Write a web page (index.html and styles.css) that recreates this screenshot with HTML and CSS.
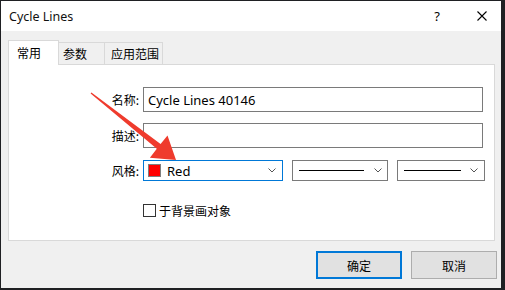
FILE: index.html
```html
<!DOCTYPE html>
<html>
<head>
<meta charset="utf-8">
<link rel="stylesheet" href="styles.css">
</head>
<body>
<div class="win">
  <div class="titlebar">
    <span class="title">Cycle Lines</span>
    <span class="help">?</span>
    <span class="close"><svg width="10" height="10" viewBox="0 0 10 10"><path d="M0.5 0.5L9.5 9.5M9.5 0.5L0.5 9.5" stroke="#000" stroke-width="1.1" fill="none"/></svg></span>
  </div>
  <div class="content">
    <div class="tabs">
      <div class="tab active">常用</div>
      <div class="tab t2">参数</div>
      <div class="tab t3">应用范围</div>
    </div>
    <div class="panel">
      <div class="row r1">
        <span class="lbl">名称:</span>
        <div class="input">Cycle Lines 40146</div>
      </div>
      <div class="row r2">
        <span class="lbl">描述:</span>
        <div class="input"></div>
      </div>
      <div class="row r3">
        <span class="lbl">风格:</span>
        <div class="combo c1 focus">
          <span class="swatch"></span><span class="ctext">Red</span>
          <svg class="chev" width="8" height="5" viewBox="0 0 8 5"><polyline points="0.5,0.5 4,4 7.5,0.5" fill="none" stroke="#555" stroke-width="1"/></svg>
        </div>
        <div class="combo c2">
          <span class="line l2"></span>
          <svg class="chev" width="8" height="5" viewBox="0 0 8 5"><polyline points="0.5,0.5 4,4 7.5,0.5" fill="none" stroke="#555" stroke-width="1"/></svg>
        </div>
        <div class="combo c3">
          <span class="line l3"></span>
          <svg class="chev" width="8" height="5" viewBox="0 0 8 5"><polyline points="0.5,0.5 4,4 7.5,0.5" fill="none" stroke="#555" stroke-width="1"/></svg>
        </div>
      </div>
      <div class="row r4">
        <span class="check"></span>
        <span class="chklbl">于背景画对象</span>
      </div>
    </div>
    <div class="buttons">
      <div class="btn ok">确定</div>
      <div class="btn">取消</div>
    </div>
  </div>
</div>
<svg class="arrow" width="505" height="290" viewBox="0 0 505 290">
  <polygon points="91.4,92.4 160.6,144.0 167.5,135.4 176,160 149.9,157.7 156.8,148.8 90.6,93.6" fill="#ef3b2d"/>
</svg>
</body>
</html>
```

FILE: styles.css
```css
* { box-sizing: border-box; }
html, body { margin: 0; padding: 0; }
body {
  width: 505px;
  height: 290px;
  background: #1f2023;
  position: relative;
  overflow: hidden;
  font-family: "Noto Sans", "Noto Sans CJK SC", sans-serif;
  font-size: 12px;
  color: #000;
}
.win {
  margin: 1px 0 0 1px;
  width: 500px;
  height: 287px;
  background: #f0f0f0;
  display: flex;
  flex-direction: column;
}
.titlebar {
  height: 30px;
  background: #fff;
  display: flex;
  align-items: center;
  padding-left: 8px;
}
.title {
  font-size: 12.5px;
  color: #111;
}
.help {
  margin-left: auto;
  width: 20px;
  text-align: center;
  font-size: 13px;
}
.close {
  width: 20px;
  margin-left: 25px;
  margin-right: 9px;
  display: flex;
  justify-content: center;
}
.content {
  padding: 9px 6px 0 7px;
  display: flex;
  flex-direction: column;
}
.tabs {
  display: flex;
  align-items: flex-end;
  height: 24px;
  position: relative;
  z-index: 1;
}
.tab {
  font-family: "Noto Sans CJK SC", sans-serif;
  font-size: 12px;
  height: 22px;
  border: 1px solid #d9d9d9;
  border-bottom: none;
  border-left: none;
  display: flex;
  align-items: center;
  background: #f0f0f0;
}
.tab.active {
  width: 51px;
  height: 25px;
  margin-bottom: -1px;
  background: #fff;
  border-left: 1px solid #d9d9d9;
  padding-left: 8px;
  padding-bottom: 2px;
}
.t2 { width: 46px; padding-left: 4px; }
.t3 { width: 58px; padding-left: 6px; }
.panel {
  height: 177px;
  background: #fff;
  border: 1px solid #d9d9d9;
  padding-top: 22px;
  display: flex;
  flex-direction: column;
}
.row {
  display: flex;
  align-items: center;
}
.lbl {
  width: 134px;
  text-align: right;
  padding-right: 4px;
  font-family: "Noto Sans CJK SC", sans-serif;
  font-size: 12px;
}
.r2 { margin-top: 11px; }
.r3 { margin-top: 12px; }
.r4 { margin-top: 21px; padding-left: 134px; }
.input {
  width: 340px;
  height: 25px;
  border: 1px solid #7a7a7a;
  background: #fff;
  display: flex;
  align-items: center;
  padding-left: 4px;
  font-size: 13px;
}
.combo {
  height: 21px;
  border: 1px solid #7a7a7a;
  display: flex;
  align-items: center;
  position: relative;
}
.combo.focus { border-color: #0078d7; }
.c1 { width: 140px; padding-left: 4px; }
.c2 { width: 96px; margin-left: 9px; padding-left: 6px; }
.c3 { width: 88px; margin-left: 9px; padding-left: 6px; }
.swatch {
  width: 13px;
  height: 13px;
  background: #ff0000;
  border: 1px solid #7f7f7f;
}
.ctext {
  margin-left: 6px;
  font-size: 13px;
}
.chev { margin-left: auto; margin-right: 6px; }
.c2 .chev { margin-right: 5px; }
.c3 .chev { margin-right: 6px; }
.line {
  height: 1px;
  background: #000;
}
.l2 { width: 65px; }
.l3 { width: 57px; }
.check {
  width: 13px;
  height: 13px;
  border: 1px solid #333;
  background: #fff;
}
.chklbl {
  margin-left: 3px;
  font-family: "Noto Sans CJK SC", sans-serif;
  font-size: 12px;
}
.buttons {
  display: flex;
  justify-content: flex-end;
  gap: 9px;
  margin-top: 10px;
  margin-right: -2px;
}
.btn {
  width: 86px;
  height: 28px;
  background: #e1e1e1;
  border: 1px solid #adadad;
  display: flex;
  align-items: center;
  justify-content: center;
  font-family: "Noto Sans CJK SC", sans-serif;
  font-size: 12px;
}
.btn.ok { border: 2px solid #0078d7; }
.arrow {
  position: absolute;
  left: 0;
  top: 0;
  pointer-events: none;
}
```
